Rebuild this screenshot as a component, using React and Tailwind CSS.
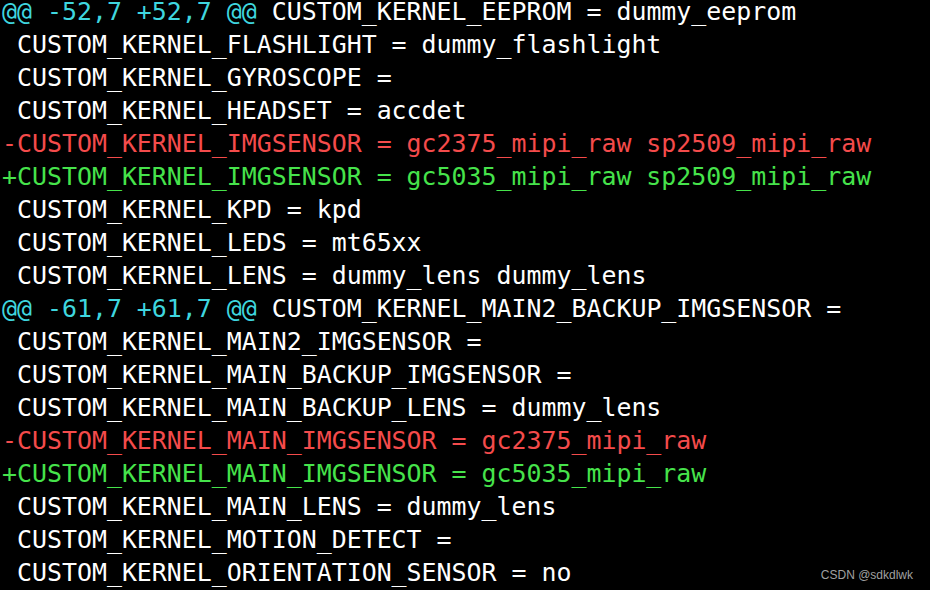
const lines = [
  { t: '@@ -52,7 +52,7 @@', rest: ' CUSTOM_KERNEL_EEPROM = dummy_eeprom', c: 'hunk' },
  { t: ' CUSTOM_KERNEL_FLASHLIGHT = dummy_flashlight' },
  { t: ' CUSTOM_KERNEL_GYROSCOPE =' },
  { t: ' CUSTOM_KERNEL_HEADSET = accdet' },
  { t: '-CUSTOM_KERNEL_IMGSENSOR = gc2375_mipi_raw sp2509_mipi_raw', c: 'del' },
  { t: '+CUSTOM_KERNEL_IMGSENSOR = gc5035_mipi_raw sp2509_mipi_raw', c: 'add' },
  { t: ' CUSTOM_KERNEL_KPD = kpd' },
  { t: ' CUSTOM_KERNEL_LEDS = mt65xx' },
  { t: ' CUSTOM_KERNEL_LENS = dummy_lens dummy_lens' },
  { t: '@@ -61,7 +61,7 @@', rest: ' CUSTOM_KERNEL_MAIN2_BACKUP_IMGSENSOR =', c: 'hunk' },
  { t: ' CUSTOM_KERNEL_MAIN2_IMGSENSOR =' },
  { t: ' CUSTOM_KERNEL_MAIN_BACKUP_IMGSENSOR =' },
  { t: ' CUSTOM_KERNEL_MAIN_BACKUP_LENS = dummy_lens' },
  { t: '-CUSTOM_KERNEL_MAIN_IMGSENSOR = gc2375_mipi_raw', c: 'del' },
  { t: '+CUSTOM_KERNEL_MAIN_IMGSENSOR = gc5035_mipi_raw', c: 'add' },
  { t: ' CUSTOM_KERNEL_MAIN_LENS = dummy_lens' },
  { t: ' CUSTOM_KERNEL_MOTION_DETECT =' },
  { t: ' CUSTOM_KERNEL_ORIENTATION_SENSOR = no' },
]

function Line({ t, rest, c }) {
  if (c === 'hunk') {
    return (
      <div className="whitespace-pre">
        <span className="text-[#3fd6df]">{t}</span>
        <span className="text-white">{rest}</span>
      </div>
    )
  }
  const color = c === 'del' ? 'text-[#f44b4b]' : c === 'add' ? 'text-[#46e34b]' : 'text-white'
  return <div className={`whitespace-pre ${color}`}>{t}</div>
}

export default function App() {
  return (
    <div className="relative w-[930px] h-[590px] bg-black overflow-hidden">
      <div className="-mt-[5px] pl-[2px] font-['DejaVu_Sans_Mono',monospace] text-[24.9px] leading-[33px]">
        {lines.map((l, i) => (
          <Line key={i} {...l} />
        ))}
      </div>
      <div className="absolute right-[17px] bottom-[6px] font-['Liberation_Sans',sans-serif] text-[12px] text-[#a0a0a0]">
        CSDN @sdkdlwk
      </div>
    </div>
  )
}
